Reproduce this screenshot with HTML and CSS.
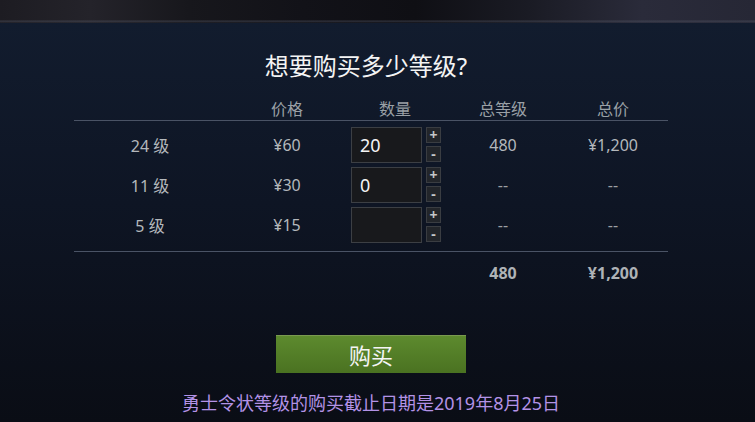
FILE: index.html
```html
<!DOCTYPE html>
<html lang="zh-CN">
<head>
    <meta charset="UTF-8">
    <meta name="viewport" content="width=device-width, initial-scale=1.0">
    <title>购买等级</title>
    <link rel="stylesheet" href="styles.css">
</head>
<body>
    <!-- 顶部背景图条 -->
    <div class="banner"></div>

    <div class="panel">
        <div class="content">
            <h1 class="title">想要购买多少等级?</h1>

            <div class="grid head">
                <div></div>
                <div>价格</div>
                <div>数量</div>
                <div>总等级</div>
                <div>总价</div>
            </div>

            <div class="rows">
                <div class="grid row">
                    <div>24 级</div>
                    <div>¥60</div>
                    <div class="qty">
                        <div class="qty-box">20</div>
                        <div class="qty-btns">
                            <span class="btn-step">+</span>
                            <span class="btn-step">-</span>
                        </div>
                    </div>
                    <div>480</div>
                    <div>¥1,200</div>
                </div>
                <div class="grid row">
                    <div>11 级</div>
                    <div>¥30</div>
                    <div class="qty">
                        <div class="qty-box">0</div>
                        <div class="qty-btns">
                            <span class="btn-step">+</span>
                            <span class="btn-step">-</span>
                        </div>
                    </div>
                    <div class="dash">--</div>
                    <div class="dash">--</div>
                </div>
                <div class="grid row">
                    <div>5 级</div>
                    <div>¥15</div>
                    <div class="qty">
                        <div class="qty-box"></div>
                        <div class="qty-btns">
                            <span class="btn-step">+</span>
                            <span class="btn-step">-</span>
                        </div>
                    </div>
                    <div class="dash">--</div>
                    <div class="dash">--</div>
                </div>
            </div>

            <div class="grid total">
                <div></div>
                <div></div>
                <div></div>
                <div>480</div>
                <div>¥1,200</div>
            </div>

            <button class="btn-buy">购买</button>
            <p class="note">勇士令状等级的购买截止日期是2019年8月25日</p>
        </div>
    </div>
</body>
</html>
```

FILE: styles.css
```css
* {
    margin: 0;
    padding: 0;
    box-sizing: border-box;
}

body, html {
    width: 755px;
    height: 422px;
    overflow: hidden;
    font-family: "Noto Sans", "Noto Sans CJK SC", sans-serif;
    background: #0a0d14;
}

/* 顶部的背景图 */
.banner {
    height: 23px;
    background:
        linear-gradient(to bottom, rgba(0, 0, 0, 0) 20px, rgba(80, 84, 100, 0.5) 21px, rgba(0, 0, 0, 0) 23px),
        linear-gradient(to right, #1d1c22 0%, #24232a 12%, #17171c 25%, #121218 40%, #0f0f14 55%, #1a1b24 70%, #2a2b3a 85%, #262735 100%);
}

.panel {
    height: 399px;
    background: linear-gradient(to bottom, #121c2e 0%, #0e1524 45%, #0a0d15 100%);
}

.content {
    width: 594px;
    margin-left: 74px;
    padding-top: 27px;
    display: flex;
    flex-direction: column;
    align-items: center;
}

.title {
    font-size: 24px;
    line-height: 32px;
    font-weight: normal;
    color: #f4f4f4;
    margin-bottom: 15px;
    margin-right: 10px;
}

.grid {
    width: 100%;
    display: grid;
    grid-template-columns: 152px 122px 94px 122px 98px 6px;
    align-items: center;
    text-align: center;
}

.head {
    height: 24px;
    line-height: 24px;
    font-size: 16px;
    color: #9aa0a6;
    border-bottom: 1px solid #4a5365;
}

.rows {
    width: 100%;
    padding: 4px 0 6px;
    border-bottom: 1px solid #4a5365;
}

.row {
    height: 40px;
    font-size: 16px;
    color: #b4b8bc;
}

.dash {
    color: #9ca0a4;
}

.qty {
    display: flex;
    justify-content: center;
    gap: 4px;
    padding-left: 2px;
}

.qty-box {
    width: 71px;
    height: 36px;
    background: #18191c;
    border: 1px solid #3c3f44;
    color: #f4f4f4;
    font-size: 18px;
    line-height: 34px;
    text-align: left;
    padding-left: 8px;
}

.qty-btns {
    display: flex;
    flex-direction: column;
    gap: 3px;
}

.btn-step {
    width: 15px;
    height: 16px;
    background: #22252a;
    border: 1px solid #3a3d42;
    color: #c4c6c8;
    font-size: 14px;
    font-weight: bold;
    line-height: 13px;
    text-align: center;
}

.total {
    height: 41px;
    font-size: 16px;
    font-weight: bold;
    color: #aeb2b6;
}

.btn-buy {
    margin-top: 42px;
    width: 190px;
    height: 38px;
    border: none;
    border-top: 1px solid #7a9a50;
    background: linear-gradient(to bottom, #5d8a2e, #4a7221);
    color: #f4f4f4;
    font-family: inherit;
    font-size: 22px;
    line-height: 36px;
    cursor: pointer;
}

.note {
    margin-top: 18px;
    font-size: 18px;
    line-height: 24px;
    color: #b392e6;
}
```
